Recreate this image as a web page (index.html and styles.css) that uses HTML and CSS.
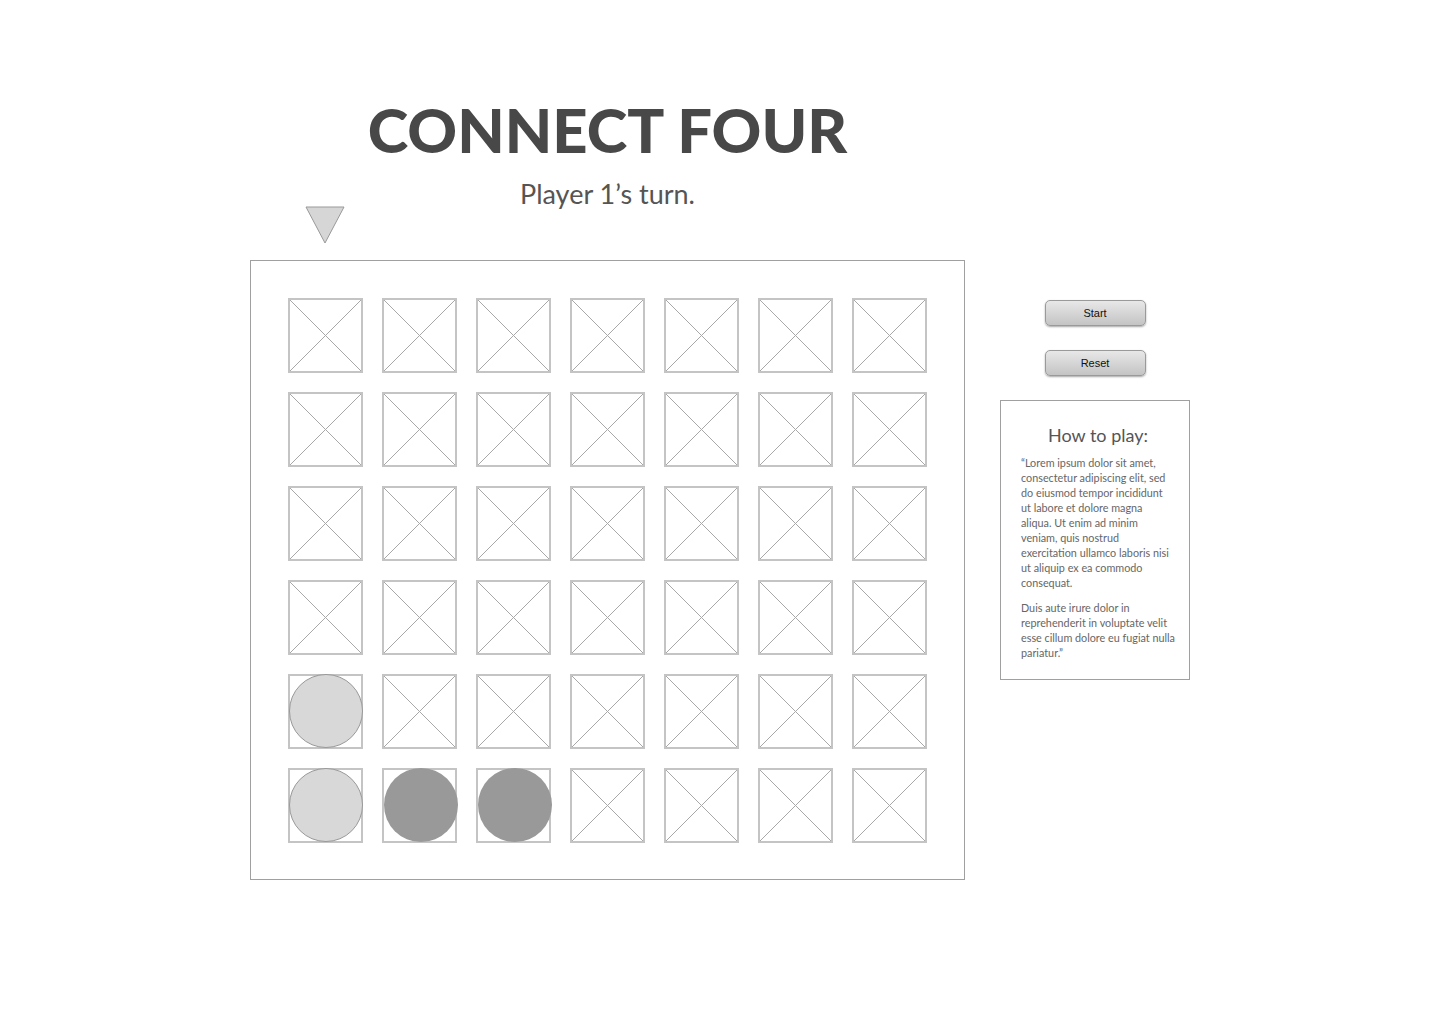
FILE: index.html
```html
<!DOCTYPE html>
<html>
<head>
<meta charset="utf-8">
<title>Connect Four</title>
<link rel="stylesheet" href="styles.css">
</head>
<body>
<div class="page">
    <div class="game">
        <h1 class="title">CONNECT FOUR</h1>
        <p class="turn">Player 1’s turn.</p>

        <div class="drop-row">
            <svg class="marker" width="40" height="38" viewBox="0 0 40 38">
                <polygon points="1,1 39,1 20,37" fill="#d6d6d6" stroke="#999" stroke-width="1"/>
            </svg>
        </div>

        <div class="board">
            <div class="cell"></div><div class="cell"></div><div class="cell"></div><div class="cell"></div><div class="cell"></div><div class="cell"></div><div class="cell"></div>
            <div class="cell"></div><div class="cell"></div><div class="cell"></div><div class="cell"></div><div class="cell"></div><div class="cell"></div><div class="cell"></div>
            <div class="cell"></div><div class="cell"></div><div class="cell"></div><div class="cell"></div><div class="cell"></div><div class="cell"></div><div class="cell"></div>
            <div class="cell"></div><div class="cell"></div><div class="cell"></div><div class="cell"></div><div class="cell"></div><div class="cell"></div><div class="cell"></div>
            <div class="cell filled"><div class="piece light"></div></div><div class="cell"></div><div class="cell"></div><div class="cell"></div><div class="cell"></div><div class="cell"></div><div class="cell"></div>
            <div class="cell filled"><div class="piece light"></div></div><div class="cell filled"><div class="piece dark"></div></div><div class="cell filled"><div class="piece dark"></div></div><div class="cell"></div><div class="cell"></div><div class="cell"></div><div class="cell"></div>
        </div>
    </div>

    <div class="sidebar">
        <button class="btn">Start</button>
        <button class="btn">Reset</button>

        <div class="rules">
            <h2>How to play:</h2>
            <p>“Lorem ipsum dolor sit amet, consectetur adipiscing elit, sed do eiusmod tempor incididunt ut labore et dolore magna aliqua. Ut enim ad minim veniam, quis nostrud exercitation ullamco laboris nisi ut aliquip ex ea commodo consequat.</p>
            <p>Duis aute irure dolor in reprehenderit in voluptate velit esse cillum dolore eu fugiat nulla pariatur.”</p>
        </div>
    </div>
</div>
</body>
</html>
```

FILE: styles.css
```css
body {
    margin: 0;
    background: #fff;
    font-family: Lato, "Open Sans", sans-serif;
    color: #4a4a4a;
}

.page {
    display: flex;
    align-items: flex-start;
    padding-left: 250px;
}

.game {
    width: 715px;
}

.title {
    margin: 0;
    padding-top: 95px;
    font-size: 61.5px;
    line-height: 68px;
    font-weight: 900;
    text-align: center;
    color: #484848;
}

.turn {
    margin: 18px 0 0;
    font-size: 27px;
    line-height: 25px;
    font-weight: 400;
    text-align: center;
    color: #555;
}

.drop-row {
    height: 54px;
    padding-left: 55px;
}

.marker {
    display: block;
}

.board {
    box-sizing: border-box;
    width: 715px;
    height: 620px;
    border: 1px solid #a0a0a0;
    padding: 37px;
    display: grid;
    grid-template-columns: repeat(7, 75px);
    grid-template-rows: repeat(6, 75px);
    column-gap: 19px;
    row-gap: 19px;
}

.cell {
    box-sizing: border-box;
    border: 2px solid #c4c4c4;
    background:
        linear-gradient(to top right, transparent calc(50% - 0.7px), #a8a8a8, transparent calc(50% + 0.7px)),
        linear-gradient(to bottom right, transparent calc(50% - 0.7px), #a8a8a8, transparent calc(50% + 0.7px));
    position: relative;
}

.cell.filled {
    background: #fff;
}

.piece {
    position: absolute;
    left: -1px;
    top: -2px;
    width: 74px;
    height: 74px;
    border-radius: 50%;
    box-sizing: border-box;
}

.piece.light {
    background: #d8d8d8;
    border: 1px solid #999;
}

.piece.dark {
    background: #999;
    left: 0;
}

.sidebar {
    margin-left: 35px;
    margin-top: 300px;
    width: 190px;
    display: flex;
    flex-direction: column;
    align-items: center;
}

.btn {
    width: 101px;
    height: 26px;
    margin-bottom: 24px;
    border: 1px solid #9a9a9a;
    border-radius: 5px;
    background: linear-gradient(#e8e8e8, #c4c4c4);
    box-shadow: 0 1px 2px rgba(0, 0, 0, 0.35);
    font-family: "Liberation Sans", Arial, sans-serif;
    font-size: 11px;
    color: #111;
    padding: 0;
}

.rules {
    box-sizing: border-box;
    width: 190px;
    height: 280px;
    border: 1px solid #a0a0a0;
    padding: 22px 14px 0 20px;
}

.rules h2 {
    margin: 0 0 8px;
    font-size: 18px;
    line-height: 24px;
    font-weight: 400;
    text-align: center;
    color: #555;
}

.rules p {
    margin: 0 0 10px;
    font-size: 10.8px;
    line-height: 15px;
    color: #666;
}
```
